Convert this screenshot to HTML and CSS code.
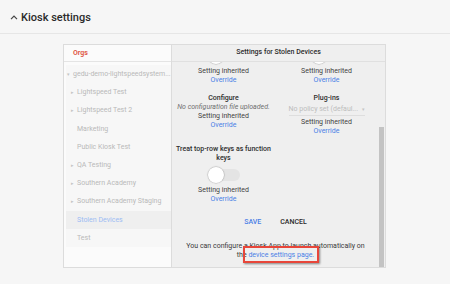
FILE: index.html
```html
<!DOCTYPE html>
<html lang="en">
  <head>
    <meta charset="UTF-8" />
    <title>Kiosk settings</title>
    <link rel="stylesheet" href="styles.css">
  </head>
  <body>
    <header class="section-head">
      <svg class="chevron" width="8" height="5" viewBox="0 0 8 5">
        <path d="M1 4.2 L4 1.2 L7 4.2" fill="none" stroke="#444" stroke-width="1.2" />
      </svg>
      <h2>Kiosk settings</h2>
    </header>

    <div class="panel">
      <aside class="orgs">
        <div class="orgs-head">Orgs</div>
        <ul class="org-list">
          <li class="org root"><span class="caret">&#9662;</span>gedu-demo-lightspeedsystem...</li>
          <li class="org"><span class="caret">&#9656;</span>Lightspeed Test</li>
          <li class="org"><span class="caret">&#9656;</span>Lightspeed Test 2</li>
          <li class="org">Marketing</li>
          <li class="org">Public Kiosk Test</li>
          <li class="org"><span class="caret">&#9656;</span>QA Testing</li>
          <li class="org"><span class="caret">&#9656;</span>Southern Academy</li>
          <li class="org"><span class="caret">&#9656;</span>Southern Academy Staging</li>
          <li class="org selected">Stolen Devices</li>
          <li class="org">Test</li>
        </ul>
      </aside>

      <section class="settings">
        <div class="settings-head">Settings for Stolen Devices</div>
        <div class="settings-body">
          <div class="settings-scroll">
            <div class="setting-grid">
              <div class="setting first">
                <div class="toggle"><div class="knob"></div></div>
                <div class="inherited">Setting inherited</div>
                <a class="override" href="#">Override</a>
              </div>
              <div class="setting first">
                <div class="toggle"><div class="knob"></div></div>
                <div class="inherited">Setting inherited</div>
                <a class="override" href="#">Override</a>
              </div>

              <div class="setting">
                <div class="label">Configure</div>
                <div class="hint">No configuration file uploaded.</div>
                <div class="inherited">Setting inherited</div>
                <a class="override" href="#">Override</a>
              </div>
              <div class="setting">
                <div class="label">Plug-ins</div>
                <div class="select">No policy set (defaul...<span class="arrow">&#9662;</span></div>
                <div class="inherited">Setting inherited</div>
                <a class="override" href="#">Override</a>
              </div>

              <div class="setting">
                <div class="label">Treat top-row keys as function keys</div>
                <div class="toggle spaced"><div class="knob"></div></div>
                <div class="inherited">Setting inherited</div>
                <a class="override" href="#">Override</a>
              </div>
            </div>

            <div class="actions">
              <button class="btn save">SAVE</button>
              <button class="btn cancel">CANCEL</button>
            </div>

            <p class="note">
              You can configure a Kiosk App to launch automatically on
              the <span class="marked"><a href="#">device settings page.</a></span>
            </p>
          </div>
          <div class="scrollbar"><div class="thumb"></div></div>
        </div>
      </section>
    </div>
  </body>
</html>
```

FILE: styles.css
```css
* {
  margin: 0;
  padding: 0;
  box-sizing: border-box;
  font-family: Roboto, "Liberation Sans", sans-serif;
}

body {
  background-color: #f6f6f6;
  color: #333;
  width: 450px;
  height: 284px;
  overflow: hidden;
}

.section-head {
  display: flex;
  align-items: center;
  height: 34px;
  padding: 1px 0 0 10px;
  border-bottom: 1px solid #e6e6e6;
}

.chevron {
  margin-right: 3px;
}

.section-head h2 {
  font-size: 11px;
  font-weight: 500;
  color: #2b2b2b;
}

.panel {
  display: flex;
  width: 323px;
  height: 224px;
  margin: 10px 0 0 63px;
  border: 1px solid #dcdcdc;
  background: #fbfbfb;
}

/* orgs column */
.orgs {
  width: 108px;
  border-right: 1px solid #dcdcdc;
  background: #fbfbfb;
}

.orgs-head {
  height: 17px;
  line-height: 16px;
  padding-left: 9px;
  font-size: 7px;
  font-weight: 700;
  color: #e05a49;
  border-bottom: 1px solid #e4e4e4;
}

.org-list {
  list-style: none;
  padding: 3px 0 0 2px;
}

.org {
  height: 18.2px;
  line-height: 18.2px;
  padding-left: 11px;
  font-size: 7px;
  color: #b9b9b9;
  background: #f7f7f7;
  white-space: nowrap;
  overflow: hidden;
}

.org.root {
  padding-left: 5px;
}

.caret {
  display: inline-block;
  width: 6px;
  margin-left: -6px;
  font-size: 5px;
  color: #c4c4c4;
}

.org.root .caret {
  margin-left: -4px;
}

.org.selected {
  background: #efefef;
  color: #9dbcf3;
}

/* settings column */
.settings {
  flex: 1;
  display: flex;
  flex-direction: column;
  background: #efefef;
}

.settings-head {
  height: 17px;
  line-height: 15px;
  text-align: center;
  font-size: 7px;
  font-weight: 500;
  color: #2b2b2b;
  border-bottom: 1px solid #e0e0e0;
}

.settings-body {
  flex: 1;
  display: flex;
  overflow: hidden;
}

.settings-scroll {
  flex: 1;
  margin-top: -14px;
}

.scrollbar {
  width: 6px;
  padding-top: 65px;
}

.thumb {
  width: 5px;
  height: 140px;
  background: #c3c3c3;
}

.setting-grid {
  display: grid;
  grid-template-columns: 103px 103px;
  row-gap: 9px;
  align-items: start;
}

.setting {
  display: flex;
  flex-direction: column;
  align-items: center;
  text-align: center;
  font-size: 7px;
  line-height: 9px;
}

.label {
  font-weight: 500;
  color: #2e2e2e;
}

.hint {
  font-style: italic;
  color: #6f6f6f;
}

.inherited {
  color: #3f3f3f;
}

.override {
  color: #4a80e6;
  text-decoration: none;
}

.toggle {
  position: relative;
  width: 32px;
  height: 16px;
  margin-bottom: 2.5px;
}

.toggle::before {
  content: "";
  position: absolute;
  left: 2px;
  top: 2px;
  width: 30px;
  height: 12px;
  border-radius: 6px;
  background: #e4e4e4;
}

.knob {
  position: relative;
  width: 16px;
  height: 16px;
  border-radius: 50%;
  background: #fff;
  box-shadow: 0 0 1px 0.5px rgba(0, 0, 0, 0.25);
}

.toggle.spaced {
  margin-top: 4.5px;
}

.select {
  position: relative;
  width: 76px;
  height: 13px;
  line-height: 12px;
  margin-bottom: 2px;
  padding-right: 6px;
  color: #bdbdbd;
  text-align: left;
  border-bottom: 1px solid #dedede;
  white-space: nowrap;
}

.arrow {
  position: absolute;
  right: 0;
  top: 0;
  font-size: 5px;
  color: #c4c4c4;
}

.actions {
  display: flex;
  justify-content: center;
  gap: 15px;
  margin-top: 14px;
}

.btn {
  border: none;
  background: none;
  padding: 0 2px;
  font-size: 7px;
  line-height: 9px;
  font-weight: 500;
}

.btn.save {
  color: #4a80e6;
}

.btn.cancel {
  color: #2b2b2b;
}

.note {
  margin-top: 15px;
  padding: 0 12px;
  text-align: center;
  font-size: 7px;
  line-height: 9px;
  color: #3a3a3a;
}

.note a {
  color: #4a80e6;
  text-decoration: none;
}

.marked {
  position: relative;
}

.marked::after {
  content: "";
  position: absolute;
  left: -5px;
  right: -5px;
  top: -5px;
  bottom: -4px;
  border: 2.5px solid #e8463a;
  box-shadow: 1px 1px 2px rgba(0, 0, 0, 0.45);
}
```
